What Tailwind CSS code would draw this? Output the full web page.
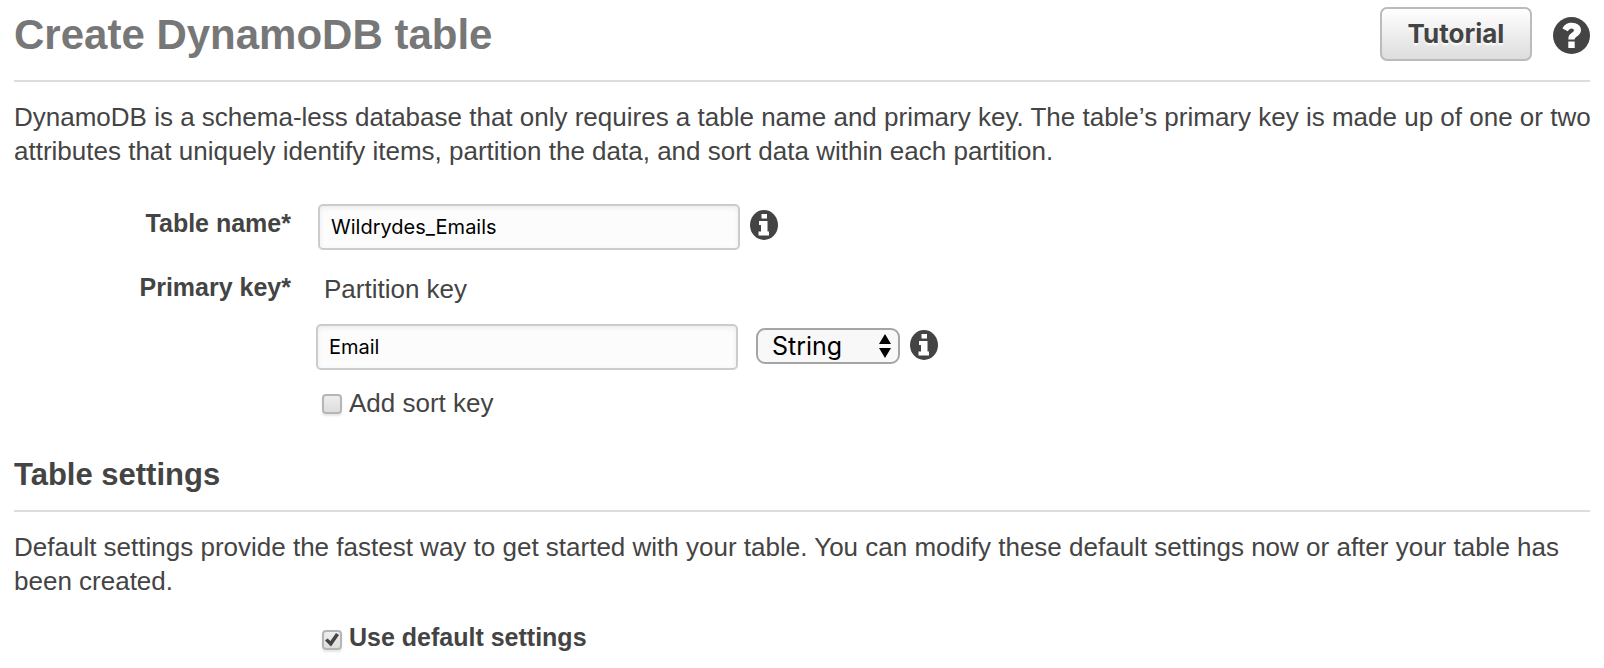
<!DOCTYPE html>
<html lang="en">
<head>
<meta charset="utf-8">
<meta name="viewport" content="width=device-width, initial-scale=1">
<title>Create DynamoDB table</title>
<script src="https://cdn.jsdelivr.net/npm/@tailwindcss/browser@4"></script>
</head>
<body class="bg-white font-['Liberation_Sans',Arial,sans-serif] text-[26px] leading-[34px] text-[#444]">
<svg class="hidden" aria-hidden="true">
  <symbol id="info" viewBox="0 0 28 30">
    <ellipse cx="14" cy="15" rx="14" ry="15" fill="#444"/>
    <path fill="#fff" d="M11.500 4h5.500v4.500h-5.500zM9 11h8.500v10.500H19V25.500H8.500V21.500H11V15H9z"/>
  </symbol>
</svg>
<main class="px-3.5">
  <header class="flex items-start justify-between border-b-2 border-[#ddd] pt-[7px] pb-[18px]">
    <h1 class="pt-px text-[42px] leading-[54px] font-bold text-[#777]">Create DynamoDB table</h1>
    <div class="flex items-center gap-[21px]">
      <button type="button" class="h-[54px] w-[152px] rounded-[7px] border-2 border-[#bbb] bg-linear-to-b from-white to-[#ddd] font-['Inter',sans-serif] text-[26px] font-bold text-[#444] [text-shadow:0_2px_2px_#fff]">Tutorial</button>
      <button type="button" aria-label="Help" class="mt-0.5">
        <svg class="size-[37px]" viewBox="0 0 37 37" aria-hidden="true">
          <circle cx="18.500" cy="18.500" r="18.500" fill="#444"/>
          <path fill="#fff" d="M9.500 11.500C11.500 7.500 14.500 5.800 18.800 5.800c5.200 0 9.200 2.900 9.200 7.200 0 3.500-2.200 5.200-4.500 6.700-1.300.9-1.900 1.500-1.900 2.800H15.300c0-3.800 1.200-5.200 3.700-6.800 1.400-.9 1.900-1.500 1.900-2.400 0-1.200-1-1.900-2.300-1.900-1.600 0-2.500.9-3.800 2.900zM15.300 24.500h6.400v6.500h-6.400z"/>
        </svg>
      </button>
    </div>
  </header>

  <p class="mt-[18px] -mr-3">DynamoDB is a schema-less database that only requires a table name and primary key. The table’s primary key is made up of one or two attributes that uniquely identify items, partition the data, and sort data within each partition.</p>

  <form class="mt-9 grid grid-cols-[277px_1fr] gap-x-[25px] gap-y-5">
    <label for="table-name" class="pt-0.5 text-right text-[25px] font-bold">Table name*</label>
    <div class="flex items-center gap-2.5 pl-0.5">
      <input id="table-name" type="text" value="Wildrydes_Emails" class="h-[46px] w-[422px] rounded-[5px] border-2 border-[#ccc] bg-[#fcfcfc] px-[11px] font-['Inter',sans-serif] text-xl text-black shadow-[inset_0_2px_5px_rgba(0,0,0,0.07)]">
      <svg class="mb-1 h-[30px] w-7" role="img" aria-label="Table name information"><use href="#info"/></svg>
    </div>
    <label for="partition-key" class="text-right text-[25px] font-bold">Primary key*</label>
    <div class="pt-0.5">
      <p class="pl-2">Partition key</p>
      <div class="mt-[18px] flex items-center">
        <input id="partition-key" type="text" value="Email" class="h-[46px] w-[422px] rounded-[5px] border-2 border-[#ccc] bg-[#fcfcfc] px-[11px] font-['Inter',sans-serif] text-xl text-black shadow-[inset_0_2px_5px_rgba(0,0,0,0.07)]">
        <div class="relative mb-0.5 ml-[18px]">
          <select aria-label="Key type" class="block h-9 w-36 appearance-none rounded-[9px] border-2 border-[#a5a5a5] bg-[#f8f8f8] pl-3.5 font-['Inter',sans-serif] text-[25px] leading-[30px] text-black">
            <option>String</option>
            <option>Number</option>
            <option>Binary</option>
          </select>
          <svg class="pointer-events-none absolute top-1.5 right-[9px] h-6 w-3" viewBox="0 0 12 24" aria-hidden="true"><path d="M6 0l6 10H0zM6 24l6-10H0z"/></svg>
        </div>
        <svg class="mb-1 ml-2.5 h-[30px] w-7" role="img" aria-label="Partition key information"><use href="#info"/></svg>
      </div>
      <label class="mt-4 flex items-center gap-[7px] pl-1.5">
        <input type="checkbox" class="mt-0.5 size-5 appearance-none rounded-[4px] border-2 border-[#b5b5b5] bg-linear-to-b from-[#eee] to-[#ddd] shadow-[0_2px_2px_rgba(0,0,0,0.1)]">
        Add sort key
      </label>
    </div>
  </form>

  <h2 class="mt-[35px] border-b-2 border-[#ddd] pb-[15px] text-[31px] leading-10 font-bold">Table settings</h2>
  <p class="mt-[18px]">Default settings provide the fastest way to get started with your table. You can modify these default settings now or after your table has been created.</p>
  <label class="mt-[22px] ml-[308px] flex items-center gap-[7px] text-[25px] font-bold">
    <span class="relative mt-1.5 flex">
      <input type="checkbox" checked class="peer size-5 appearance-none rounded-[4px] border-2 border-[#b5b5b5] bg-linear-to-b from-[#eee] to-[#ddd] shadow-[0_2px_2px_rgba(0,0,0,0.1)]">
      <svg class="pointer-events-none absolute inset-0 hidden size-5 peer-checked:block" viewBox="0 0 20 20" aria-hidden="true"><path d="M3 10.500l2.500-2 3 2.500 5.500-8 3 2L9 16.500z" fill="#444"/></svg>
    </span>
    Use default settings
  </label>
</main>
</body>
</html>
